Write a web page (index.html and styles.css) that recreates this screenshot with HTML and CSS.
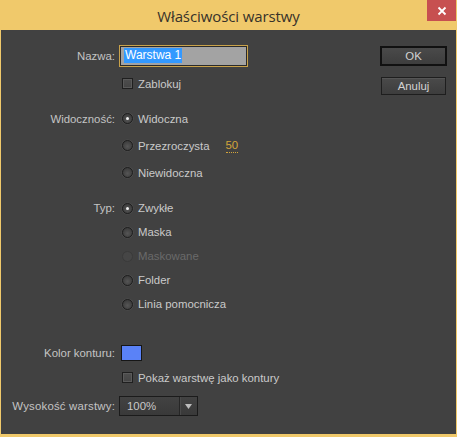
FILE: index.html
```html
<!DOCTYPE html>
<html lang="pl">
<head>
<meta charset="utf-8">
<title>Właściwości warstwy</title>
<link rel="stylesheet" href="styles.css">
</head>
<body>
<div class="window">
  <header class="titlebar">
    <span></span>
    <span class="title">Właściwości warstwy</span>
    <span class="close"><svg width="10" height="10" viewBox="0 0 10 10"><path d="M1.5 1.5 L8.5 8.5 M8.5 1.5 L1.5 8.5" stroke="#fff" stroke-width="1.8" fill="none"/></svg></span>
  </header>
  <div class="body">
    <div class="form">
      <div class="block block-name">
        <div class="row r-name">
          <span class="lbl">Nazwa:</span>
          <span class="input"><span class="sel">Warstwa 1</span></span>
        </div>
        <div class="row r-lock">
          <span class="lbl"></span>
          <span class="opt"><span class="check"></span>Zablokuj</span>
        </div>
      </div>
      <div class="block block-vis">
        <div class="row r-vis">
          <span class="lbl">Widoczność:</span>
          <span class="opt"><span class="radio on"></span>Widoczna</span>
        </div>
        <div class="row r-vis">
          <span class="lbl"></span>
          <span class="opt"><span class="radio"></span>Przezroczysta<span class="num">50</span></span>
        </div>
        <div class="row r-vis">
          <span class="lbl"></span>
          <span class="opt"><span class="radio"></span>Niewidoczna</span>
        </div>
      </div>
      <div class="block block-type">
        <div class="row r-type">
          <span class="lbl">Typ:</span>
          <span class="opt"><span class="radio on"></span>Zwykłe</span>
        </div>
        <div class="row r-type">
          <span class="lbl"></span>
          <span class="opt"><span class="radio"></span>Maska</span>
        </div>
        <div class="row r-type">
          <span class="lbl"></span>
          <span class="opt disabled"><span class="radio"></span>Maskowane</span>
        </div>
        <div class="row r-type">
          <span class="lbl"></span>
          <span class="opt"><span class="radio"></span>Folder</span>
        </div>
        <div class="row r-type">
          <span class="lbl"></span>
          <span class="opt"><span class="radio"></span>Linia pomocnicza</span>
        </div>
      </div>
      <div class="block block-outline">
        <div class="row r-color">
          <span class="lbl">Kolor konturu:</span>
          <span class="swatch"></span>
        </div>
        <div class="row r-show">
          <span class="lbl"></span>
          <span class="opt"><span class="check"></span>Pokaż warstwę jako kontury</span>
        </div>
        <div class="row r-height">
          <span class="lbl wide">Wysokość warstwy:</span>
          <span class="select"><span class="sel-val">100%</span><span class="sel-btn"><svg width="7" height="5" viewBox="0 0 7 5"><path d="M0 0 H7 L3.5 5 Z" fill="#bdbdbd"/></svg></span></span>
        </div>
      </div>
    </div>
    <div class="buttons">
      <span class="btn default">OK</span>
      <span class="btn">Anuluj</span>
    </div>
  </div>
</div>
</body>
</html>
```

FILE: styles.css
```css
* { box-sizing: border-box; }
html, body { margin: 0; padding: 0; }
body {
  width: 457px;
  height: 437px;
  overflow: hidden;
  background: #f0c96b;
  font-family: "Liberation Sans", Arial, sans-serif;
  font-size: 11.4px;
  color: #c8c8c8;
}
.window {
  width: 457px;
  height: 437px;
  display: flex;
  flex-direction: column;
  background: #f0c96b;
  padding: 0 1px 3px 1px;
}
.titlebar {
  height: 30px;
  display: grid;
  grid-template-columns: 1fr auto 1fr;
  align-items: center;
  margin: 0 -1px;
}
.title {
  font-family: "Open Sans", "Noto Sans", sans-serif;
  font-size: 15px;
  color: #36322a;
  padding-top: 1px;
  letter-spacing: -0.1px;
}
.close {
  justify-self: end;
  align-self: start;
  width: 29px;
  height: 21px;
  margin-right: 1px;
  background: #c75050;
  display: flex;
  align-items: center;
  justify-content: center;
}
.body {
  flex: 1;
  background: #414141;
  display: flex;
}
.form {
  flex: 1;
  display: flex;
  flex-direction: column;
  padding-top: 14px;
}
.block { display: flex; flex-direction: column; }
.block-vis { margin-top: 10px; }
.block-type { margin-top: 10px; }
.block-outline { margin-top: 25px; }

.row {
  display: grid;
  grid-template-columns: 114px 1fr;
  column-gap: 4px;
  align-items: center;
}
.r-name { height: 23px; }
.r-lock { height: 23px; margin-top: 5px; }
.r-vis { height: 27px; }
.r-type { height: 24px; }
.r-color { height: 24px; }
.r-show { height: 25px; }
.r-height { height: 24px; margin-top: 4px; }

.lbl {
  text-align: right;
  color: #c4c4c4;
  white-space: nowrap;
}
.lbl.wide { letter-spacing: 0.2px; }
.opt {
  display: flex;
  align-items: center;
  padding-left: 3px;
  color: #cacaca;
  white-space: nowrap;
}
.opt.disabled { color: #6a6a6a; }

.input {
  width: 129px;
  height: 22px;
  border: 1px solid #c9a24a;
  box-shadow: inset 0 0 0 1px #2a2a2a;
  background: #a3a3a3;
  display: flex;
  align-items: center;
  padding-left: 4px;
}
.sel {
  background: #3399ff;
  color: #fff;
  line-height: 15px;
  padding: 0 1px 0 1px;
  font-size: 12px;
}

.check {
  width: 11px;
  height: 11px;
  border: 1px solid #1f1f1f;
  background: linear-gradient(#4e4e4e, #444);
  box-shadow: inset 0 0 0 1px #5a5a5a;
  margin-right: 5px;
}
.radio {
  width: 11px;
  height: 11px;
  border-radius: 50%;
  border: 1px solid #1e1e1e;
  background: radial-gradient(circle at 50% 60%, #565656, #3a3a3a 80%);
  box-shadow: 0 0 0 0.6px #505050;
  margin-right: 5px;
  display: flex;
  align-items: center;
  justify-content: center;
}
.radio.on::after {
  content: "";
  width: 3px;
  height: 3px;
  border-radius: 50%;
  background: #f0f0f0;
}
.opt.disabled .radio { border-color: #3a3a3a; background: #464646; box-shadow: none; }

.num {
  margin-left: 16px;
  color: #d4a53a;
  border-bottom: 1px dotted #d4a53a;
  line-height: 13px;
}

.swatch {
  width: 21px;
  height: 16px;
  margin-left: 2px;
  background: #5a82f7;
  border: 1px solid #161616;
}

.select {
  width: 79px;
  height: 20px;
  border: 1px solid #1b1b1b;
  background: linear-gradient(#424242, #393939);
  display: flex;
  align-items: stretch;
}
.sel-val {
  flex: 1;
  padding-left: 7px;
  display: flex;
  align-items: center;
  color: #c8c8c8;
}
.sel-btn {
  width: 18px;
  border-left: 1px solid #262626;
  box-shadow: inset 1px 0 0 #4a4a4a;
  display: flex;
  align-items: center;
  justify-content: center;
}

.buttons {
  width: 67px;
  margin-right: 9px;
  padding-top: 16px;
  display: flex;
  flex-direction: column;
  align-items: center;
}
.btn {
  width: 65px;
  height: 18px;
  border: 1px solid #1e1e1e;
  background: linear-gradient(#4a4a4a, #3d3d3d);
  box-shadow: inset 0 1px 0 #555;
  color: #d2d2d2;
  display: flex;
  align-items: center;
  justify-content: center;
}
.btn.default {
  width: 67px;
  height: 20px;
  border: 2px solid #111;
  box-shadow: none;
  margin-bottom: 11px;
}
```
